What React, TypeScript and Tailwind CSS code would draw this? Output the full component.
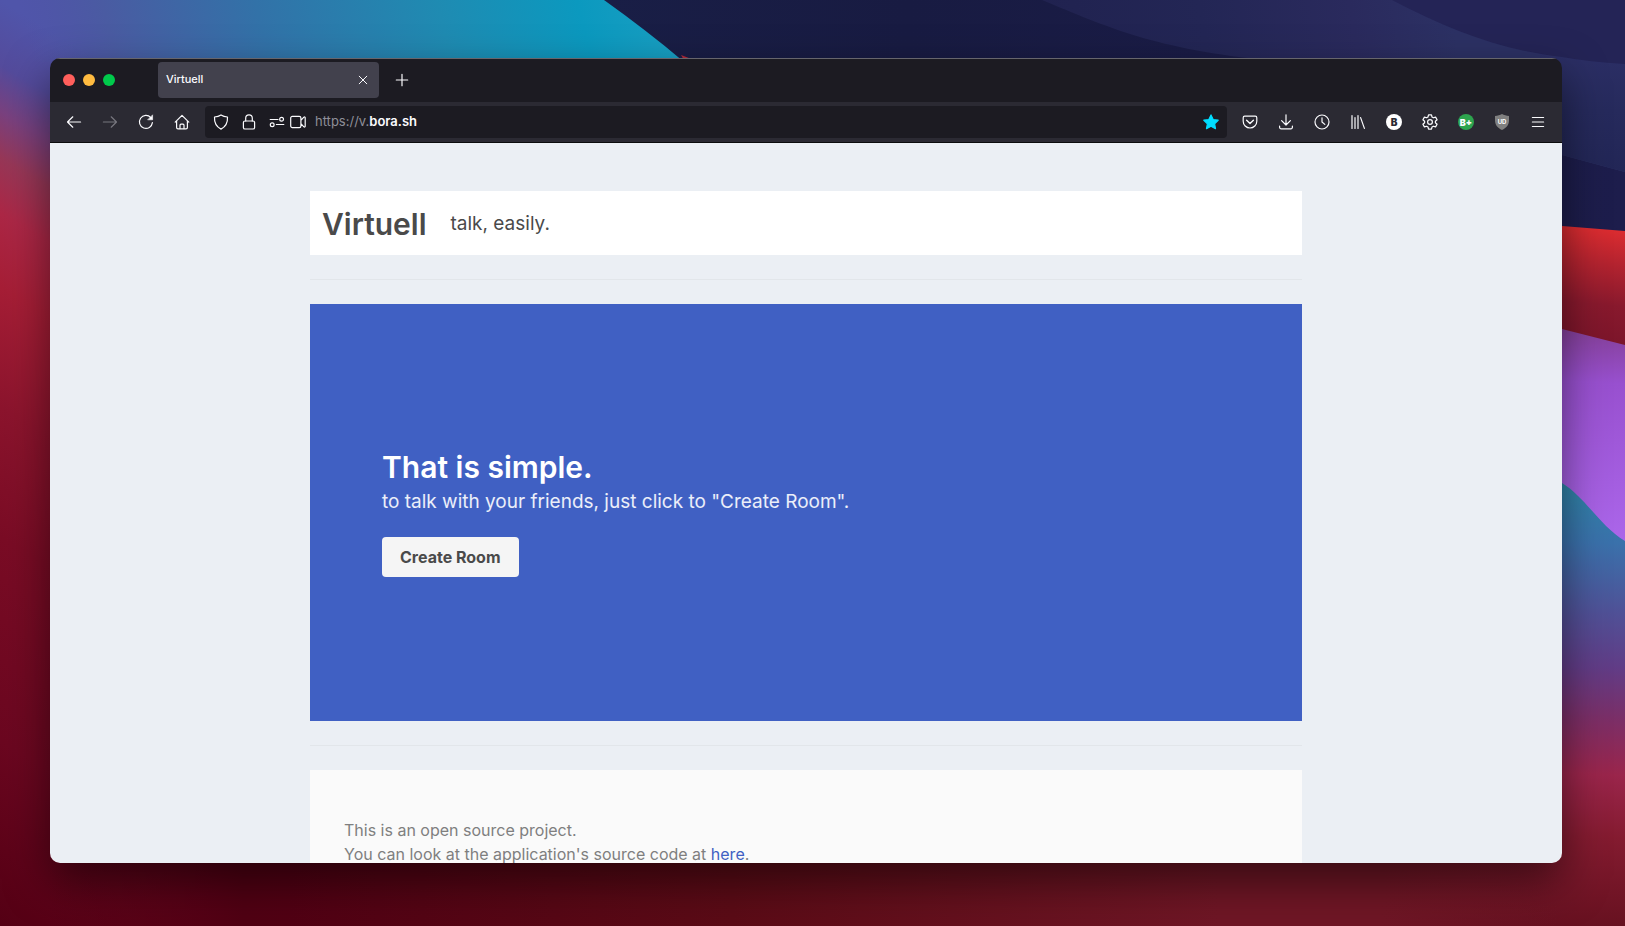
import React, { useState } from 'react'

const Icon = ({ children, className = "" }: { children: React.ReactNode, className?: string }) => (
    <svg viewBox="0 0 16 16" className={`w-4 h-4 shrink-0 ${className}`} fill="none" stroke="currentColor" strokeWidth="1.2" strokeLinecap="round" strokeLinejoin="round" aria-hidden="true">
        {children}
    </svg>
)

const ToolbarButton = ({ label, disabled, children }: { label: string, disabled?: boolean, children: React.ReactNode }) => (
    <button
        aria-label={label}
        title={label}
        disabled={disabled}
        className="flex items-center justify-center w-9 h-8 shrink-0 rounded text-[#fbfbfe] hover:bg-white/10 disabled:text-[#77767f] disabled:hover:bg-transparent"
    >
        {children}
    </button>
)

function Wallpaper() {
    return (
        <svg className="absolute inset-0 w-full h-full" viewBox="0 0 1625 926" preserveAspectRatio="none" aria-hidden="true">
            <defs>
                <linearGradient id="left" gradientUnits="userSpaceOnUse" x1="0" y1="0" x2="-408" y2="681">
                    <stop offset="0" stopColor="#5055aa" />
                    <stop offset="0.07" stopColor="#544b9c" />
                    <stop offset="0.12" stopColor="#79417f" />
                    <stop offset="0.17" stopColor="#973757" />
                    <stop offset="0.23" stopColor="#ac2746" />
                    <stop offset="0.31" stopColor="#a61e36" />
                    <stop offset="0.44" stopColor="#8c142d" />
                    <stop offset="0.58" stopColor="#7a0c25" />
                    <stop offset="0.8" stopColor="#6b0720" />
                    <stop offset="1" stopColor="#540014" />
                </linearGradient>
                <linearGradient id="bottom" x1="0" y1="0" x2="1" y2="0">
                    <stop offset="0.03" stopColor="#4f0012" stopOpacity="0" />
                    <stop offset="0.15" stopColor="#500013" />
                    <stop offset="0.45" stopColor="#5b0b16" />
                    <stop offset="0.75" stopColor="#6f1625" />
                    <stop offset="0.85" stopColor="#6f1625" />
                    <stop offset="0.96" stopColor="#6f1625" stopOpacity="0" />
                </linearGradient>
                <linearGradient id="teal" gradientUnits="userSpaceOnUse" x1="0" y1="100" x2="660" y2="-60">
                    <stop offset="0.06" stopColor="#4d55a3" stopOpacity="0" />
                    <stop offset="0.18" stopColor="#4a5ba2" />
                    <stop offset="0.4" stopColor="#3272a8" />
                    <stop offset="0.66" stopColor="#1f8bb2" />
                    <stop offset="0.86" stopColor="#0b99bf" />
                    <stop offset="1" stopColor="#1a9fc2" />
                </linearGradient>
                <linearGradient id="navy" gradientUnits="userSpaceOnUse" x1="600" y1="0" x2="1625" y2="0">
                    <stop offset="0" stopColor="#191e46" />
                    <stop offset="0.3" stopColor="#181b42" />
                    <stop offset="1" stopColor="#1d1d4c" />
                </linearGradient>
                <linearGradient id="band" gradientUnits="userSpaceOnUse" x1="960" y1="80" x2="1450" y2="0">
                    <stop offset="0" stopColor="#1f204d" />
                    <stop offset="0.5" stopColor="#232655" />
                    <stop offset="0.8" stopColor="#2a2a5d" />
                    <stop offset="1" stopColor="#2c3164" />
                </linearGradient>
                <linearGradient id="bandRight" x1="0" y1="0" x2="0" y2="1">
                    <stop offset="0" stopColor="#2c2f66" />
                    <stop offset="0.5" stopColor="#262a5c" />
                    <stop offset="1" stopColor="#222656" />
                </linearGradient>
                <linearGradient id="red" gradientUnits="userSpaceOnUse" x1="1600" y1="228" x2="1590" y2="345">
                    <stop offset="0" stopColor="#dc2c30" />
                    <stop offset="0.3" stopColor="#b3232f" />
                    <stop offset="0.65" stopColor="#88192d" />
                    <stop offset="1" stopColor="#7b152a" />
                </linearGradient>
                <linearGradient id="purple" gradientUnits="userSpaceOnUse" x1="1600" y1="330" x2="1590" y2="540">
                    <stop offset="0" stopColor="#854099" />
                    <stop offset="0.25" stopColor="#9850cf" />
                    <stop offset="1" stopColor="#ab66ea" />
                </linearGradient>
                <linearGradient id="lower" gradientUnits="userSpaceOnUse" x1="1600" y1="480" x2="1590" y2="926">
                    <stop offset="0" stopColor="#2f86a8" />
                    <stop offset="0.14" stopColor="#3a71ab" />
                    <stop offset="0.3" stopColor="#505096" />
                    <stop offset="0.42" stopColor="#613c86" />
                    <stop offset="0.53" stopColor="#7a2f68" />
                    <stop offset="0.66" stopColor="#9a254b" />
                    <stop offset="0.8" stopColor="#841b30" />
                    <stop offset="1" stopColor="#671120" />
                </linearGradient>
            </defs>
            <rect width="1625" height="926" fill="url(#left)" />
            <path d="M0 0H760V62H0Z" fill="url(#teal)" />
            {/* dark ridge */}
            <path d="M604 0C632 20 658 40 684 62H740V400H1625V0Z" fill="url(#navy)" />
            <path d="M681 55L694 60H684Z" fill="#b32b3a" />
            <path d="M1042 0C1110 28 1160 52 1290 62L1562 155L1625 172V0Z" fill="url(#band)" />
            <path d="M1540 50L1625 64V172L1562 155L1540 150Z" fill="url(#bandRight)" />
            <path d="M1392 0C1450 30 1500 50 1562 57Q1590 62 1625 64V0Z" fill="#242456" />
            {/* folds down the right side */}
            <path d="M1500 222L1562 226L1625 231V400H1500Z" fill="url(#red)" />
            <path d="M1500 320L1562 329L1625 345V600H1500Z" fill="url(#purple)" />
            <path d="M1200 450H1500L1562 483C1585 497 1600 526 1625 541V926H1200Z" fill="url(#lower)" />
            <rect y="780" width="1625" height="146" fill="url(#bottom)" />
        </svg>
    )
}

function Tabs() {
    return (
        <div className="flex items-center h-11 pl-[13px] pb-0.5 bg-[#1c1b22] border-t border-[#66656c]">
            <div className="flex items-center gap-2">
                <button aria-label="Close window" className="w-3 h-3 rounded-full bg-[#ff5f5c]" />
                <button aria-label="Minimize window" className="w-3 h-3 rounded-full bg-[#ffbb40]" />
                <button aria-label="Zoom window" className="w-3 h-3 rounded-full bg-[#00ca4b]" />
            </div>
            <div className="flex items-center justify-between w-[221px] h-9 ml-[43px] px-2 rounded bg-[#42414d]">
                <span className="text-[11px] font-medium text-[#fbfbfe]">Virtuell</span>
                <button aria-label="Close tab" className="text-[#fbfbfe]">
                    <Icon><path d="M4.2 4.2l7.6 7.6M11.8 4.2l-7.6 7.6" strokeWidth="1" /></Icon>
                </button>
            </div>
            <button aria-label="New tab" className="flex items-center justify-center w-9 h-9 ml-[5px] text-[#fbfbfe]">
                <Icon><path d="M8 2.3v11.4M2.3 8h11.4" /></Icon>
            </button>
        </div>
    )
}

function Toolbar() {
    const [address, setAddress] = useState("bora.sh")

    return (
        <div className="flex items-center h-[41px] px-1.5 bg-[#2b2a33] border-b border-[#0c0c0d]">
            <ToolbarButton label="Back">
                <Icon><path d="M14.6 8H1.6M6.8 2.8L1.5 8l5.3 5.2" /></Icon>
            </ToolbarButton>
            <ToolbarButton label="Forward" disabled>
                <Icon><path d="M1.4 8h13M9.2 2.8L14.5 8l-5.3 5.2" /></Icon>
            </ToolbarButton>
            <ToolbarButton label="Reload">
                <Icon>
                    <path d="M14.4 8.6A6.5 6.5 0 1 1 12.8 3.6" />
                    <path d="M14.6 1.2v4.6H10z" fill="currentColor" strokeWidth="0.6" />
                </Icon>
            </ToolbarButton>
            <ToolbarButton label="Home">
                <Icon>
                    <path d="M1.2 8.2L8 1.4l6.8 6.8M2.6 7v6.4a1.4 1.4 0 0 0 1.4 1.4h8a1.4 1.4 0 0 0 1.4-1.4V7" />
                    <path d="M6 14.6v-3.4a1 1 0 0 1 1-1h2a1 1 0 0 1 1 1v3.4" />
                </Icon>
            </ToolbarButton>

            <div className="flex flex-1 items-center h-8 mx-[5px] px-2 rounded bg-[#1c1b22] text-[#fbfbfe]">
                <button aria-label="Tracking protection"><Icon>
                    <path d="M8 .9c1.8 1.2 4 1.9 6.5 2.1.3 5-1.7 9.6-6.5 12.1C3.2 12.6 1.2 8 1.5 3 4 2.8 6.2 2.1 8 .9z" />
                </Icon></button>
                <button aria-label="Site information" className="ml-3"><Icon>
                    <rect x="2.4" y="7" width="11.2" height="8" rx="1.6" />
                    <path d="M4.7 7V4.2a3.3 3.3 0 0 1 6.6 0V7" />
                </Icon></button>
                <button aria-label="Permissions" className="ml-3"><Icon>
                    <path d="M1.2 5.5h7.8M7.4 10.5h7.4" />
                    <circle cx="12.6" cy="5.2" r="1.9" />
                    <circle cx="3.2" cy="10.8" r="1.9" />
                </Icon></button>
                <button aria-label="Camera" className="ml-[5px]"><Icon>
                    <path d="M2.3 2.4h7a1.6 1.6 0 0 1 1.6 1.6v8a1.6 1.6 0 0 1-1.6 1.6h-7A1.6 1.6 0 0 1 .7 12V4a1.6 1.6 0 0 1 1.6-1.6zM10.9 6.4l3-3.2c.6-.5 1.3-.2 1.3.5v8.6c0 .7-.7 1-1.3.5l-3-3.2" />
                </Icon></button>
                <label htmlFor="address" className="ml-[9px] text-[13px] text-[#8f8f98]">https://v.</label>
                <input
                    id="address"
                    value={address}
                    onChange={(e) => setAddress(e.target.value)}
                    className="flex-1 min-w-0 text-[13px] font-semibold bg-transparent outline-none"
                />
                <button aria-label="Bookmark" className="text-[#00ddff]">
                    <Icon><path d="M8 .9l2.2 4.6 5 .7-3.6 3.5.9 5L8 12.3l-4.5 2.4.9-5L.8 6.2l5-.7z" fill="currentColor" /></Icon>
                </button>
            </div>

            <ToolbarButton label="Save to Pocket">
                <Icon>
                    <path d="M2.7 2.2h10.6a1.5 1.5 0 0 1 1.5 1.5v3.5a6.8 6.8 0 0 1-13.6 0V3.7a1.5 1.5 0 0 1 1.5-1.5z" />
                    <path d="M4.6 6.2L8 9.5l3.4-3.3" strokeWidth="1.4" />
                </Icon>
            </ToolbarButton>
            <ToolbarButton label="Downloads">
                <Icon><path d="M8 .8v10M3.6 6.6L8 11l4.4-4.4M1.6 12v1.3a1.5 1.5 0 0 0 1.5 1.5h9.8a1.5 1.5 0 0 0 1.5-1.5V12" /></Icon>
            </ToolbarButton>
            <ToolbarButton label="History">
                <Icon><circle cx="8" cy="8" r="7" /><path d="M8 3.8V8l2.8 2.4" /></Icon>
            </ToolbarButton>
            <ToolbarButton label="Library">
                <Icon><path d="M2 1.6v12.8M5 3.6v10.8M8 1.6v12.8M10.6 3.6l3.8 10.8" /></Icon>
            </ToolbarButton>
            <ToolbarButton label="Account">
                <span className="flex items-center justify-center w-4 h-4 rounded-full bg-white text-[10px] leading-none font-black text-[#2b2a33]">B</span>
            </ToolbarButton>
            <ToolbarButton label="Settings">
                <Icon>
                    <path d="M6.5 .8h3l.5 2.2 1.4.8 2.2-.7 1.5 2.6-1.7 1.5v1.6l1.7 1.5-1.5 2.6-2.2-.7-1.4.8-.5 2.2h-3L6 13l-1.4-.8-2.2.7L.9 10.300l1.700-1.500V7.200L.9 5.700l1.500-2.600 2.200.7L6 3z" />
                    <circle cx="8" cy="8" r="2.4" />
                </Icon>
            </ToolbarButton>
            <ToolbarButton label="Extension">
                <span className="flex items-center justify-center w-4 h-4 rounded-full bg-[#2da44e] text-[9px] leading-none font-black">B+</span>
            </ToolbarButton>
            <ToolbarButton label="Content blocker">
                <svg viewBox="0 0 16 16" className="w-4 h-4" aria-hidden="true">
                    <path d="M8 0c2 1.2 4.4 1.8 7 2v4.5c0 4.5-2.8 7.5-7 9.5-4.2-2-7-5-7-9.500V2c2.600-.2 5-.8 7-2z" fill="#808080" />
                    <text x="8" y="9.6" textAnchor="middle" fontSize="6" fontWeight="700" fill="#fff">UD</text>
                </svg>
            </ToolbarButton>
            <ToolbarButton label="Menu">
                <Icon><path d="M2.4 3.5h11.2M2.4 8h11.2M2.4 12.5h11.2" /></Icon>
            </ToolbarButton>
        </div>
    )
}

function Page() {
    return (
        <main className="flex-1 min-h-0 overflow-hidden pt-12 bg-[#ebeff4] text-[#4a4a4a]">
            <div className="max-w-[992px] mx-auto">
                <header className="flex items-center gap-6 h-16 px-3 pt-0.5 bg-white">
                    <h1 className="text-[30px] leading-9 font-semibold">Virtuell</h1>
                    <p className="text-[19px] leading-8">talk, easily.</p>
                </header>

                <hr className="my-6 border-[#e2e6ea]" />

                <section className="px-[72px] py-36 bg-[#4060c3] text-white">
                    <h2 className="text-[30px] leading-[38px] font-semibold">That is simple.</h2>
                    <p className="text-[19px] leading-8 text-white/90">to talk with your friends, just click to "Create Room".</p>
                    <button className="h-10 mt-[19px] px-[18px] rounded bg-[#f5f5f5] font-bold text-[#4a4a4a] hover:bg-[#eeeeee]">
                        Create Room
                    </button>
                </section>

                <hr className="my-6 border-[#e2e6ea]" />

                <footer className="px-[34px] py-12 bg-[#fafafa] text-[#7f7f7f]">
                    <p>This is an open source project.</p>
                    <p>You can look at the application's source code at <a href="#source" className="text-[#4060c3]">here</a>.</p>
                </footer>
            </div>
        </main>
    )
}

export default function App() {
    return (
        <div className="relative flex h-screen pt-[58px] pr-[63px] pb-[63px] pl-[50px] overflow-hidden font-['Inter',sans-serif]">
            <Wallpaper />
            <div className="relative flex flex-col flex-1 min-w-0 overflow-hidden rounded-[10px] shadow-[0_18px_44px_rgba(0,0,0,0.5)]">
                <Tabs />
                <Toolbar />
                <Page />
            </div>
        </div>
    )
}
